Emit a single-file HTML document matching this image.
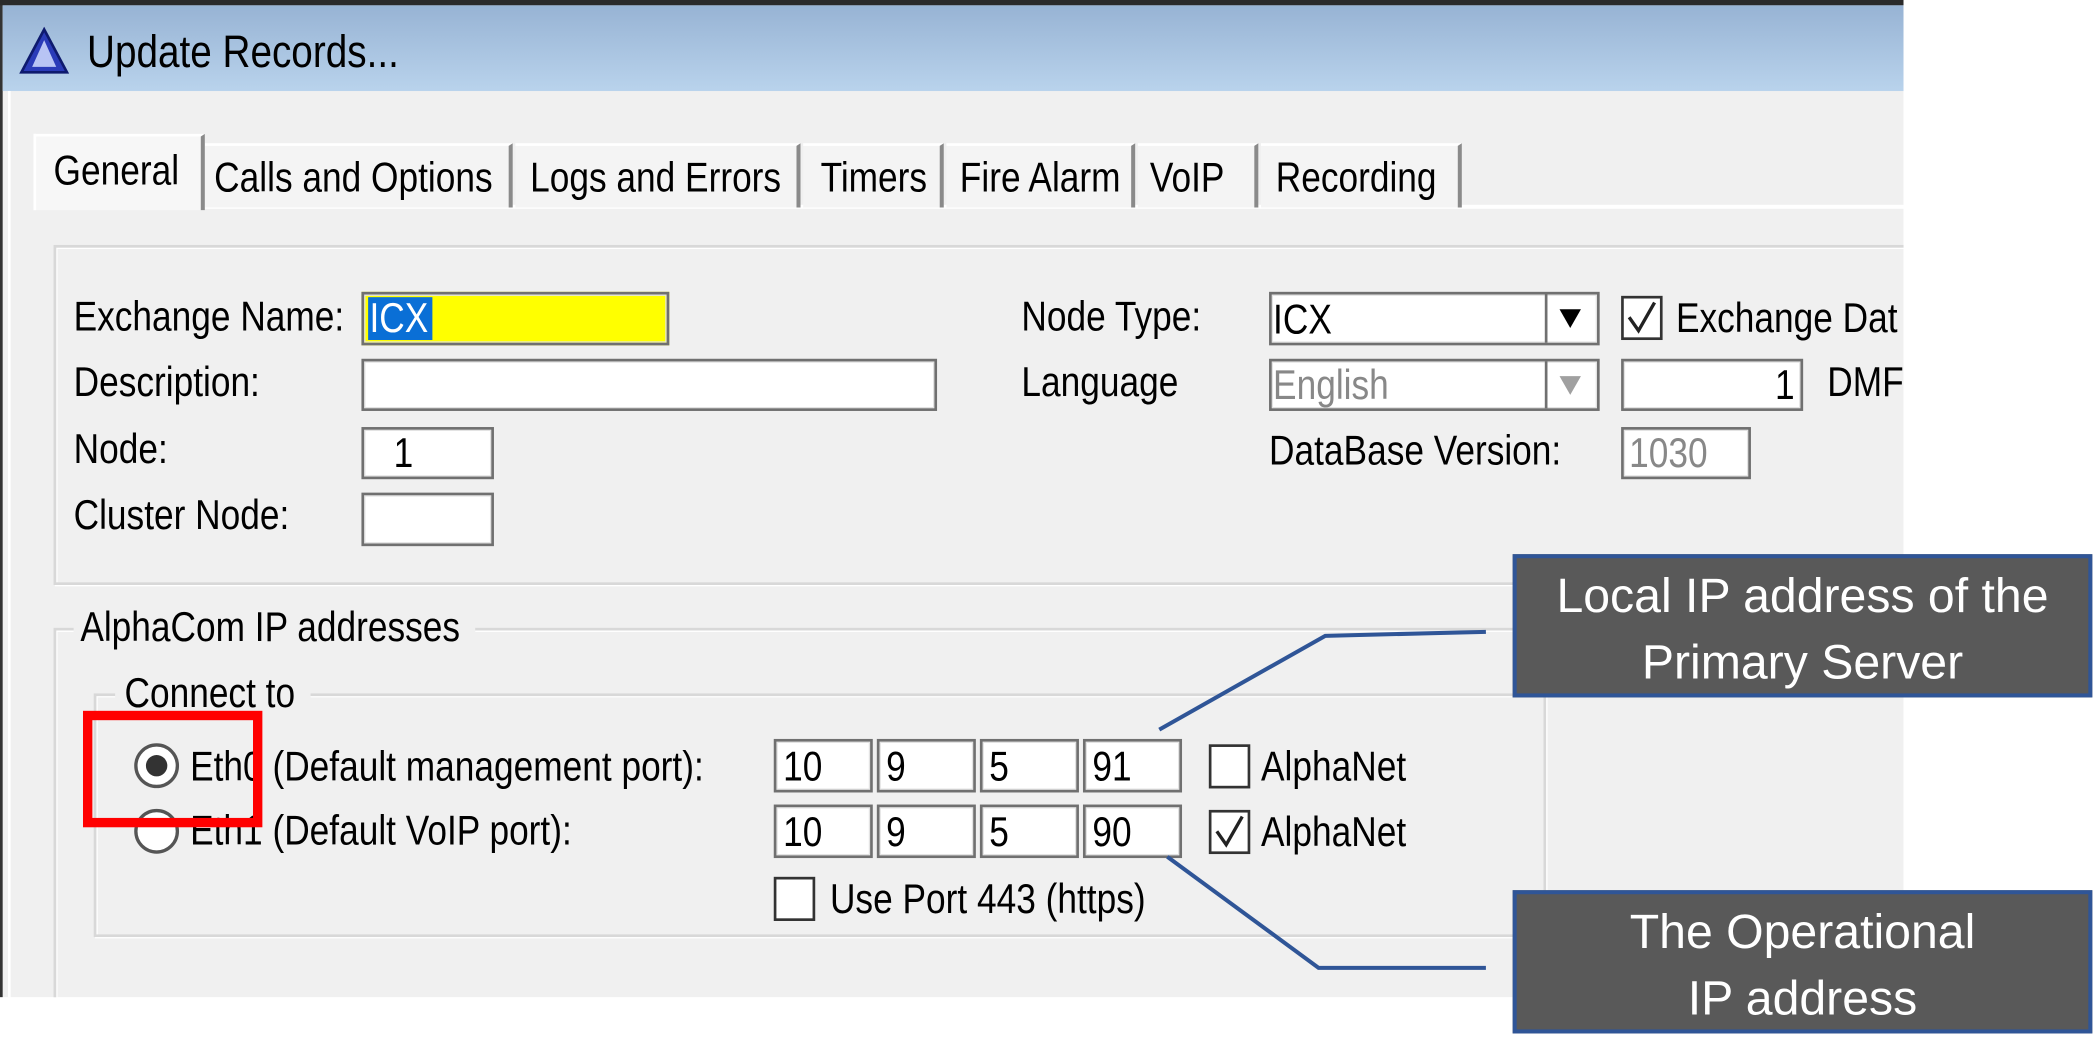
<!DOCTYPE html>
<html><head><meta charset="utf-8"><style>
html,body{margin:0;padding:0;background:#fff;width:2099px;height:1060px;overflow:hidden}
#s{position:absolute;left:0;top:0;width:1568px;height:792px;transform:scale(1.33865);transform-origin:0 0;font-family:"Liberation Sans",sans-serif;color:#000}
.a{position:absolute;box-sizing:border-box}
.t{position:absolute;white-space:nowrap;font-size:31px;line-height:34px;transform:translateY(-50%) scaleX(.85);transform-origin:0 50%}
.in{position:absolute;box-sizing:border-box;background:#fff;border:2px solid #707070;box-shadow:inset 0 0 0 1px #e3e3e3}
.cb{position:absolute;box-sizing:border-box;background:#fff;border:2px solid #333;width:31px;height:33px}
.gb{position:absolute;box-sizing:border-box;border:2px solid #d8d8d8;box-shadow:1px 1px 0 #fff inset,1px 1px 0 #fff}
.tab{position:absolute;top:107px;height:48px;box-sizing:border-box;border-top:2px solid #fff;border-right:3px solid #8a8a8a;background:#f4f4f4}
.co{position:absolute;box-sizing:border-box;background:#595959;border:3px solid #2f5597;color:#fff;font-size:36px;line-height:50px;text-align:center;padding-top:3px}
#clip{position:absolute;left:0;top:0;width:1422px;height:745px;overflow:hidden}
</style></head><body><div id="s">
<div id="clip">
<div class="a" style="left:0;top:0;width:1422px;height:745px;background:#f0f0f0;border-left:2px solid #333"></div>
<div class="a" style="left:0;top:0;width:1422px;height:4px;background:#2a2a2a"></div>
<div class="a" style="left:2px;top:4px;width:1420px;height:64px;background:linear-gradient(#97b3d4,#b9d3ec)"></div>
<div class="a" style="left:6px;top:68px;width:2px;height:677px;background:#fff"></div>
<svg class="a" style="left:14px;top:20px" width="38" height="36" viewBox="0 0 38 36"><polygon points="19,2 36,34 2,34" fill="#2a3bb8" stroke="#0e1a6e" stroke-width="2"/><polygon points="19,10 28,30 10,30" fill="#b8c4f4"/></svg>
<div class="t" style="left:65px;top:39px;font-size:34px">Update Records...</div>
<div class="a" style="left:25px;top:153px;width:1397px;height:3px;background:#fff"></div>
<div class="tab" style="left:153px;width:230px"></div>
<div class="tab" style="left:385px;width:213px"></div>
<div class="tab" style="left:600px;width:105px"></div>
<div class="tab" style="left:707px;width:141px"></div>
<div class="tab" style="left:850px;width:90px"></div>
<div class="tab" style="left:942px;width:150px"></div>
<div class="a" style="left:25px;top:100px;width:128px;height:57px;background:#f7f7f7;border-top:2px solid #fff;border-left:2px solid #fff;border-right:3px solid #8a8a8a"></div>
<div class="t" style="left:40px;top:128px">General</div>
<div class="t" style="left:160px;top:133px">Calls and Options</div>
<div class="t" style="left:396px;top:133px">Logs and Errors</div>
<div class="t" style="left:613px;top:133px">Timers</div>
<div class="t" style="left:717px;top:133px">Fire Alarm</div>
<div class="t" style="left:859px;top:133px">VoIP</div>
<div class="t" style="left:953px;top:133px">Recording</div>
<div class="gb" style="left:40px;top:183px;width:1420px;height:254px"></div>
<div class="t" style="left:55px;top:237px">Exchange Name:</div>
<div class="in" style="left:270px;top:218px;width:230px;height:40px;background:#ffff00"></div>
<div class="a" style="left:275px;top:222px;width:48px;height:32px;background:#0a6fd6"></div>
<div class="t" style="left:276px;top:238px;color:#fff">ICX</div>
<div class="t" style="left:55px;top:286px">Description:</div>
<div class="in" style="left:270px;top:268px;width:430px;height:39px"></div>
<div class="t" style="left:55px;top:336px">Node:</div>
<div class="in" style="left:270px;top:319px;width:99px;height:39px"></div>
<div class="t" style="left:294px;top:339px">1</div>
<div class="t" style="left:55px;top:385px">Cluster Node:</div>
<div class="in" style="left:270px;top:368px;width:99px;height:40px"></div>
<div class="t" style="left:763px;top:237px">Node Type:</div>
<div class="in" style="left:948px;top:218px;width:247px;height:40px"></div>
<div class="a" style="left:1154px;top:220px;width:2px;height:36px;background:#707070"></div>
<div class="t" style="left:951px;top:239px">ICX</div>
<div class="a" style="left:1165px;top:231px;width:0;height:0;border-left:8px solid transparent;border-right:8px solid transparent;border-top:14px solid #000"></div>
<div class="cb" style="left:1211px;top:221px"></div>
<svg class="a" style="left:1213px;top:223px" width="27" height="29"><polyline points="4,14 11,24 23,3" fill="none" stroke="#222" stroke-width="2.5"/></svg>
<div class="t" style="left:1252px;top:238px">Exchange Dat</div>
<div class="t" style="left:763px;top:286px">Language</div>
<div class="in" style="left:948px;top:268px;width:247px;height:39px"></div>
<div class="a" style="left:1154px;top:270px;width:2px;height:35px;background:#707070"></div>
<div class="t" style="left:951px;top:288px;color:#888">English</div>
<div class="a" style="left:1165px;top:281px;width:0;height:0;border-left:8px solid transparent;border-right:8px solid transparent;border-top:14px solid #a0a0a0"></div>
<div class="in" style="left:1211px;top:268px;width:136px;height:39px"></div>
<div class="t" style="left:1326px;top:288px">1</div>
<div class="t" style="left:1365px;top:286px">DMF</div>
<div class="t" style="left:948px;top:337px">DataBase Version:</div>
<div class="in" style="left:1211px;top:319px;width:97px;height:39px"></div>
<div class="t" style="left:1217px;top:339px;color:#888">1030</div>
<div class="gb" style="left:40px;top:469px;width:1420px;height:330px"></div>
<div class="a" style="left:55px;top:455px;width:300px;height:30px;background:#f0f0f0"></div>
<div class="t" style="left:60px;top:469px">AlphaCom IP addresses</div>
<div class="gb" style="left:70px;top:518px;width:1085px;height:182px"></div>
<div class="a" style="left:86px;top:505px;width:146px;height:28px;background:#f0f0f0"></div>
<div class="t" style="left:93px;top:518px">Connect to</div>
<svg class="a" style="left:99px;top:554px" width="38" height="84"><circle cx="18" cy="18" r="15.5" fill="#fff" stroke="#555" stroke-width="2.5"/><circle cx="18" cy="18" r="8" fill="#333"/><circle cx="18" cy="67" r="15.5" fill="#fff" stroke="#555" stroke-width="2.5"/></svg>
<div class="t" style="left:142px;top:573px">Eth0 (Default management port):</div>
<div class="t" style="left:142px;top:621px">Eth1 (Default VoIP port):</div>
<div class="in" style="left:578px;top:552px;width:74px;height:40px"></div>
<div class="in" style="left:655px;top:552px;width:74px;height:40px"></div>
<div class="in" style="left:732px;top:552px;width:74px;height:40px"></div>
<div class="in" style="left:809px;top:552px;width:74px;height:40px"></div>
<div class="in" style="left:578px;top:601px;width:74px;height:40px"></div>
<div class="in" style="left:655px;top:601px;width:74px;height:40px"></div>
<div class="in" style="left:732px;top:601px;width:74px;height:40px"></div>
<div class="in" style="left:809px;top:601px;width:74px;height:40px"></div>
<div class="t" style="left:585px;top:573px">10</div><div class="t" style="left:662px;top:573px">9</div><div class="t" style="left:739px;top:573px">5</div><div class="t" style="left:816px;top:573px">91</div>
<div class="t" style="left:585px;top:622px">10</div><div class="t" style="left:662px;top:622px">9</div><div class="t" style="left:739px;top:622px">5</div><div class="t" style="left:816px;top:622px">90</div>
<div class="cb" style="left:903px;top:556px"></div>
<div class="t" style="left:942px;top:573px">AlphaNet</div>
<div class="cb" style="left:903px;top:605px"></div>
<svg class="a" style="left:905px;top:607px" width="27" height="29"><polyline points="4,14 11,24 23,3" fill="none" stroke="#222" stroke-width="2.5"/></svg>
<div class="t" style="left:942px;top:622px">AlphaNet</div>
<div class="cb" style="left:578px;top:655px"></div>
<div class="t" style="left:620px;top:672px">Use Port 443 (https)</div>
</div>
<div class="a" style="left:62px;top:531px;width:134px;height:87px;border:7px solid #ff0000"></div>
<svg class="a" style="left:0;top:0" width="1568" height="792"><polyline points="866,545 990,475 1110,472" fill="none" stroke="#2f5597" stroke-width="3"/><polyline points="872,640 985,723 1110,723" fill="none" stroke="#2f5597" stroke-width="3"/></svg>
<div class="co" style="left:1130px;top:414px;width:433px;height:107px">Local IP address of the<br>Primary Server</div>
<div class="co" style="left:1130px;top:665px;width:433px;height:107px">The Operational<br>IP address</div>
</div></body></html>
